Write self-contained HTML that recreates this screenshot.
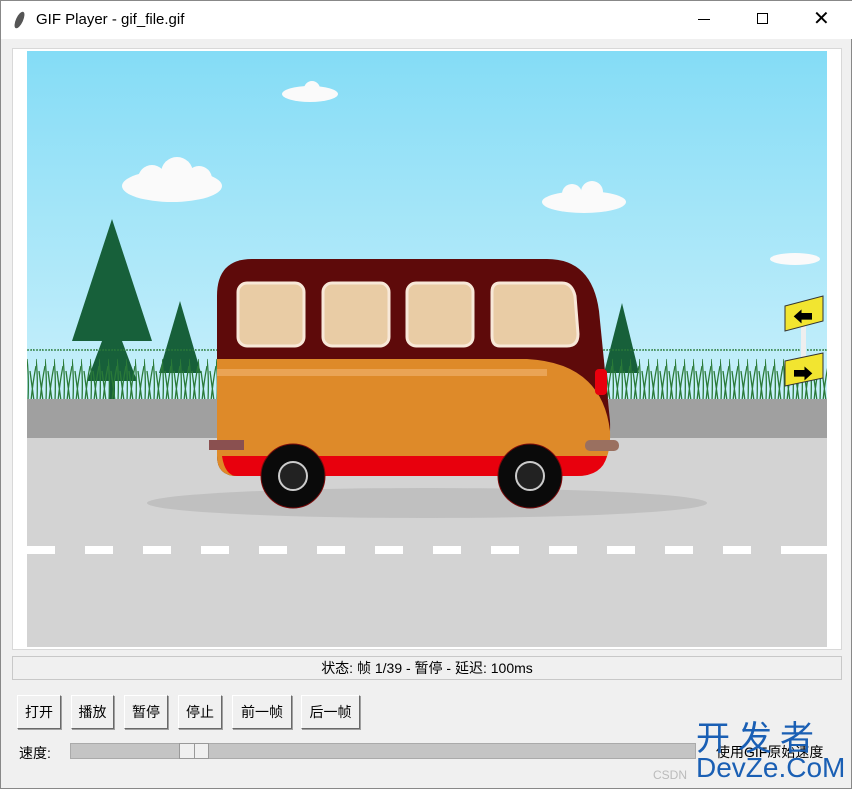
<!DOCTYPE html>
<html><head><meta charset="utf-8"><style>
*{margin:0;padding:0;box-sizing:border-box}
body{width:852px;height:789px;background:#f0f0f0;font-family:"Liberation Sans","Noto Sans CJK SC",sans-serif;font-size:14px;color:#000;position:relative;overflow:hidden;border:1px solid #888}
.a{position:absolute}
.btn{position:absolute;top:694px;height:34px;background:#f0f0f0;border:1px solid #fff;border-right-color:#696969;border-bottom-color:#696969;box-shadow:1px 1px 0 #a0a0a0;text-align:center;line-height:32px;font-size:14px}
</style></head><body>
<div class="a" style="left:0;top:0;width:852px;height:38px;background:#fff"></div>
<div class="a" style="left:15px;top:10px;width:7px;height:18px;background:#555;border-radius:50%;transform:rotate(25deg)"></div>
<div class="a" style="left:35px;top:10px;font-size:15px">GIF Player - gif_file.gif</div>
<div class="a" style="left:697px;top:18px;width:12px;height:1px;background:#000"></div>
<div class="a" style="left:756px;top:12px;width:11px;height:11px;border:1px solid #000"></div>
<div class="a" style="left:812px;top:6px;font-size:20px;line-height:24px">✕</div>
<div class="a" style="left:11px;top:47px;width:830px;height:602px;background:#fff;border:1px solid #d8d8d8"></div>
<svg class="a" style="left:26px;top:50px" width="800" height="596">
<defs><linearGradient id="sky" x1="0" y1="0" x2="0" y2="1"><stop offset="0" stop-color="#84dcf6"/><stop offset="1" stop-color="#c9f0fb"/></linearGradient>
<pattern id="gr" width="9" height="50" patternUnits="userSpaceOnUse"><path d="M1,50 Q2,25 0,8 M4,50 Q6,30 9,15 M7,50 Q5,35 3,20" stroke="#2a7a38" stroke-width="1.3" fill="none"/></pattern></defs>
<rect width="800" height="350" fill="url(#sky)"/>
<g fill="#fafafa"><ellipse cx="145" cy="135" rx="50" ry="16"/><circle cx="125" cy="128" r="14"/><circle cx="150" cy="122" r="16"/><circle cx="172" cy="128" r="13"/>
<ellipse cx="283" cy="43" rx="28" ry="8"/><circle cx="285" cy="38" r="8"/>
<ellipse cx="557" cy="151" rx="42" ry="11"/><circle cx="545" cy="143" r="10"/><circle cx="565" cy="141" r="11"/>
<ellipse cx="768" cy="208" rx="25" ry="6"/></g>
<polygon points="85,168 45,290 75,290 60,330 110,330 95,290 125,290" fill="#17603a"/>
<rect x="82" y="300" width="6" height="48" fill="#17603a"/>
<polygon points="153,250 132,322 174,322" fill="#17603a"/>
<polygon points="595,252 577,322 612,322" fill="#17603a"/>
<rect x="0" y="298" width="800" height="50" fill="url(#gr)"/>
<rect x="0" y="348" width="800" height="40" fill="#a0a0a0"/>
<rect x="0" y="387" width="800" height="209" fill="#d3d3d3"/>
<ellipse cx="400" cy="452" rx="280" ry="15" fill="#b8b8b8" opacity=".7"/>
<g fill="#fff">
<rect x="0" y="495" width="28" height="8"/><rect x="58" y="495" width="28" height="8"/><rect x="116" y="495" width="28" height="8"/><rect x="174" y="495" width="28" height="8"/><rect x="232" y="495" width="28" height="8"/><rect x="290" y="495" width="28" height="8"/><rect x="348" y="495" width="28" height="8"/><rect x="406" y="495" width="28" height="8"/><rect x="464" y="495" width="28" height="8"/><rect x="522" y="495" width="28" height="8"/><rect x="580" y="495" width="28" height="8"/><rect x="638" y="495" width="28" height="8"/><rect x="696" y="495" width="28" height="8"/><rect x="754" y="495" width="46" height="8"/></g>
<rect x="774" y="270" width="5" height="55" fill="#eee"/>
<polygon points="758,255 796,245 796,270 758,280" fill="#f2e530" stroke="#333"/>
<polygon points="758,310 796,302 796,327 758,335" fill="#f2e530" stroke="#333"/>
<text x="766" y="273" font-size="20">⬅</text><text x="766" y="330" font-size="20">➡</text>
<path d="M190,245 Q190,208 225,208 L520,208 Q565,208 572,260 L583,370 Q585,425 550,425 L210,425 Q190,425 190,405 Z" fill="#5e0a0a"/>
<path d="M190,308 L500,308 Q575,312 583,380 Q585,425 550,425 L210,425 Q190,425 190,405 Z" fill="#de8a29"/>
<rect x="190" y="318" width="330" height="7" fill="#eaa455"/>
<path d="M195,405 L580,405 Q575,425 550,425 L210,425 Q198,425 195,405Z" fill="#e8000d"/>
<rect x="568" y="318" width="12" height="26" rx="4" fill="#e8000d"/>
<g fill="#e9cca5" stroke="#f8e8d8" stroke-width="3"><rect x="211" y="232" width="66" height="63" rx="9"/><rect x="296" y="232" width="66" height="63" rx="9"/><rect x="380" y="232" width="66" height="63" rx="9"/><path d="M473,232 L535,232 Q545,232 548,245 L551,283 Q551,295 540,295 L473,295 Q465,295 465,285 L465,241 Q465,232 473,232Z"/></g>
<rect x="182" y="389" width="35" height="10" fill="#8a5050"/><rect x="558" y="389" width="34" height="11" rx="5" fill="#9a7060"/>
<g><circle cx="266" cy="425" r="32" fill="#0a0a0a" stroke="#7a0a0a"/><circle cx="266" cy="425" r="14" fill="#222" stroke="#ccc" stroke-width="2"/>
<circle cx="503" cy="425" r="32" fill="#0a0a0a" stroke="#7a0a0a"/><circle cx="503" cy="425" r="14" fill="#222" stroke="#ccc" stroke-width="2"/></g>
</svg>
<div class="a" style="left:11px;top:655px;width:830px;height:24px;border:1px solid #c8c8c8;text-align:center;line-height:22px;font-size:14px">状态: 帧 1/39 - 暂停 - 延迟: 100ms</div>
<div class="btn" style="left:16px;width:44px">打开</div>
<div class="btn" style="left:70px;width:43px">播放</div>
<div class="btn" style="left:123px;width:44px">暂停</div>
<div class="btn" style="left:177px;width:44px">停止</div>
<div class="btn" style="left:231px;width:60px">前一帧</div>
<div class="btn" style="left:300px;width:59px">后一帧</div>
<div class="a" style="left:18px;top:742px">速度:</div>
<div class="a" style="left:69px;top:742px;width:626px;height:16px;background:#c4c4c4;border:1px solid #aaa"></div>
<div class="a" style="left:178px;top:742px;width:30px;height:16px;background:#f0f0f0;border:1px solid #999"></div>
<div class="a" style="left:193px;top:743px;width:1px;height:14px;background:#999"></div>
<div class="a" style="left:695px;top:740px;width:147px;height:22px;font-size:14px;line-height:22px;padding-left:20px">使用GIF原始速度</div>
<div class="a" style="left:695px;top:718px;font-size:34px;color:#1a5fb4;letter-spacing:8px;line-height:40px">开发者</div>
<div class="a" style="left:695px;top:752px;font-size:28px;color:#1a5fb4;line-height:30px">DevZe.CoM</div>
<div class="a" style="left:652px;top:767px;font-size:12px;color:#bbb">CSDN</div>
</body></html>
